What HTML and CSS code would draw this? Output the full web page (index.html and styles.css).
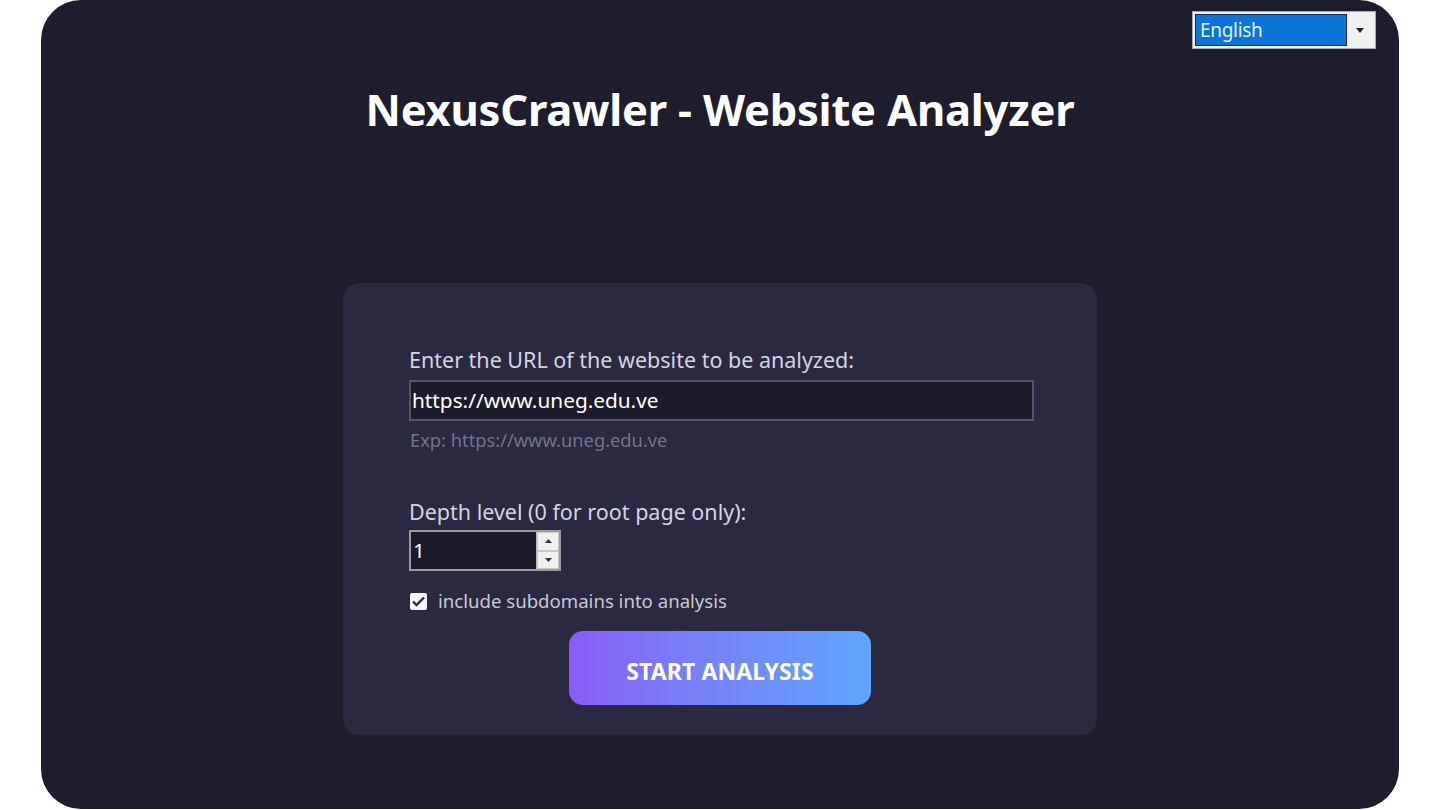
FILE: index.html
```html
<!DOCTYPE html>
<html lang="en">
<head>
<meta charset="utf-8">
<title>NexusCrawler - Website Analyzer</title>
<link rel="stylesheet" href="styles.css">
</head>
<body>
<div class="window">
  <div class="topbar">
    <div class="lang-select">
      <span class="lang-value">English</span>
      <span class="lang-arrow">
        <svg width="8" height="5" viewBox="0 0 8 5"><path d="M0 0h8L4 5z" fill="#222"/></svg>
      </span>
    </div>
  </div>
  <h1 class="title">NexusCrawler - Website Analyzer</h1>
  <div class="card">
    <label class="field-label">Enter the URL of the website to be analyzed:</label>
    <div class="url-input">https://www.uneg.edu.ve</div>
    <div class="hint">Exp: https://www.uneg.edu.ve</div>
    <label class="field-label depth-label">Depth level (0 for root page only):</label>
    <div class="spinbox">
      <span class="spin-value">1</span>
      <span class="spin-buttons">
        <span class="spin-btn"><svg width="7" height="4" viewBox="0 0 7 4"><path d="M0 4L3.5 0 7 4z" fill="#333"/></svg></span>
        <span class="spin-btn"><svg width="7" height="4" viewBox="0 0 7 4"><path d="M0 0h7L3.5 4z" fill="#333"/></svg></span>
      </span>
    </div>
    <div class="check-row">
      <span class="checkbox">
        <svg width="13" height="11" viewBox="0 0 13 11"><path d="M1 5.5l3.5 3.5L12 1.5" fill="none" stroke="#2a2a40" stroke-width="2.4"/></svg>
      </span>
      <span class="check-text">include subdomains into analysis</span>
    </div>
    <div class="btn-row">
      <button class="start-btn">START ANALYSIS</button>
    </div>
  </div>
</div>
</body>
</html>
```

FILE: styles.css
```css
html, body {
  margin: 0;
  padding: 0;
  background: #ffffff;
  height: 810px;
  overflow: hidden;
}
body {
  font-family: "Noto Sans", "Open Sans", sans-serif;
}
.window {
  margin-left: 41px;
  width: 1358px;
  height: 809px;
  background: #1e1d2e;
  border-radius: 40px;
  box-sizing: border-box;
  display: flex;
  flex-direction: column;
  align-items: center;
  overflow: hidden;
}
.topbar {
  align-self: stretch;
  display: flex;
  justify-content: flex-end;
  padding: 11px 23px 0 0;
  height: 38px;
}
.lang-select {
  width: 184px;
  height: 38px;
  box-sizing: border-box;
  background: #f0f0f0;
  border: 1px solid #a8a8b0;
  display: flex;
  padding: 2px;
}
.lang-value {
  flex: 1;
  background: #0a74da;
  border: 1px solid #1b2a4a;
  color: #e6f0ff;
  font-size: 19px;
  line-height: 30px;
  padding-left: 4px;
  letter-spacing: -0.3px;
}
.lang-arrow {
  width: 26px;
  display: flex;
  align-items: center;
  justify-content: center;
}
.title {
  margin: 35px 0 0 0;
  color: #ffffff;
  font-size: 43.5px;
  font-weight: 700;
  line-height: 50px;
  letter-spacing: -0.2px;
}
.card {
  margin-top: 149px;
  width: 754px;
  height: 452px;
  box-sizing: border-box;
  background: #2a2940;
  border-radius: 16px;
  padding: 63px 67px 0 67px;
  display: flex;
  flex-direction: column;
}
.field-label {
  color: #d4d4e0;
  font-size: 21.5px;
  line-height: 28px;
  margin-left: -1px;
}
.url-input {
  margin-top: 6px;
  width: 625px;
  height: 41px;
  box-sizing: border-box;
  background: #1c1b2c;
  border: 2px solid #55546a;
  color: #ffffff;
  font-size: 20.8px;
  line-height: 36px;
  padding-left: 1px;
  margin-left: -1px;
}
.hint {
  margin-top: 7px;
  color: #74738a;
  font-size: 18.3px;
  line-height: 24px;
}
.depth-label {
  margin-top: 46px;
}
.spinbox {
  margin-top: 4px;
  margin-left: -1px;
  width: 152px;
  height: 41px;
  box-sizing: border-box;
  border: 2px solid #9a9aa4;
  background: #1c1b2c;
  display: flex;
}
.spin-value {
  flex: 1;
  color: #ffffff;
  font-size: 20.8px;
  line-height: 36px;
  padding-left: 2px;
}
.spin-buttons {
  width: 22px;
  display: flex;
  flex-direction: column;
  background: #f0f0f0;
  border-left: 1px solid #bbb;
}
.spin-btn {
  flex: 1;
  display: flex;
  align-items: center;
  justify-content: center;
  border: 1px solid #c8c8c8;
}
.check-row {
  margin-top: 18px;
  display: flex;
  align-items: center;
  gap: 11px;
}
.checkbox {
  width: 17px;
  height: 17px;
  background: #f4f4f8;
  border-radius: 2px;
  display: flex;
  align-items: center;
  justify-content: center;
}
.check-text {
  color: #c8c8d4;
  font-size: 18.6px;
  line-height: 24px;
}
.btn-row {
  margin-top: 18px;
  display: flex;
  justify-content: center;
}
.start-btn {
  width: 302px;
  height: 74px;
  border: none;
  border-radius: 14px;
  background: linear-gradient(90deg, #8b5cf6 0%, #7a7cf8 35%, #5fa6fd 100%);
  color: #ffffff;
  font-family: "Noto Sans", "Open Sans", sans-serif;
  font-weight: 700;
  font-size: 23px;
  letter-spacing: 0.1px;
  padding: 5px 0 0 0;
}
```
